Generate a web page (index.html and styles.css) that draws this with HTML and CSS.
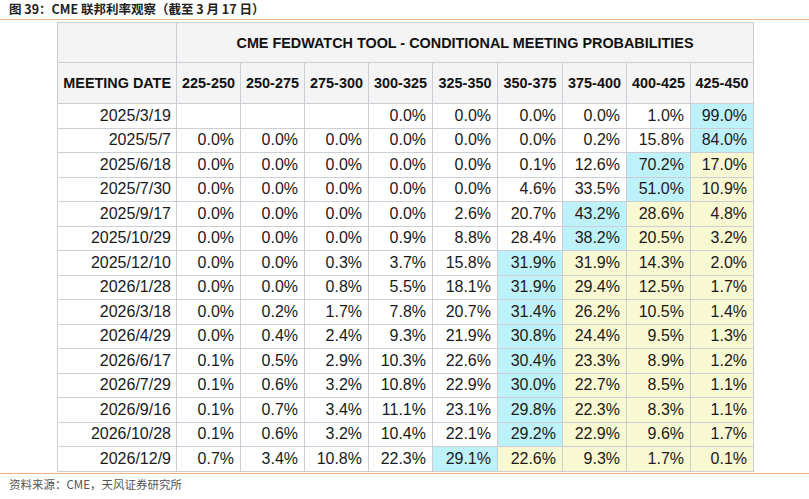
FILE: index.html
```html
<!DOCTYPE html>
<html lang="zh">
<head>
<meta charset="utf-8">
<link rel="stylesheet" href="styles.css">
</head>
<body>
<div class="caption">图 39：CME 联邦利率观察（截至 3 月 17 日）</div>
<table class="fed">
<colgroup>
<col class="c-date"><col class="c-n"><col class="c-n"><col class="c-n"><col class="c-n"><col class="c-w"><col class="c-w"><col class="c-n"><col class="c-n"><col class="c-l">
</colgroup>
<thead>
<tr class="h1"><th></th><th colspan="9">CME FEDWATCH TOOL - CONDITIONAL MEETING PROBABILITIES</th></tr>
<tr class="h2"><th>MEETING DATE</th><th>225-250</th><th>250-275</th><th>275-300</th><th>300-325</th><th>325-350</th><th>350-375</th><th>375-400</th><th>400-425</th><th>425-450</th></tr>
</thead>
<tbody>
<tr><td>2025/3/19</td><td></td><td></td><td></td><td>0.0%</td><td>0.0%</td><td>0.0%</td><td>0.0%</td><td>1.0%</td><td class="c">99.0%</td></tr>
<tr><td>2025/5/7</td><td>0.0%</td><td>0.0%</td><td>0.0%</td><td>0.0%</td><td>0.0%</td><td>0.0%</td><td>0.2%</td><td>15.8%</td><td class="c">84.0%</td></tr>
<tr><td>2025/6/18</td><td>0.0%</td><td>0.0%</td><td>0.0%</td><td>0.0%</td><td>0.0%</td><td>0.1%</td><td>12.6%</td><td class="c">70.2%</td><td class="y">17.0%</td></tr>
<tr><td>2025/7/30</td><td>0.0%</td><td>0.0%</td><td>0.0%</td><td>0.0%</td><td>0.0%</td><td>4.6%</td><td>33.5%</td><td class="c">51.0%</td><td class="y">10.9%</td></tr>
<tr><td>2025/9/17</td><td>0.0%</td><td>0.0%</td><td>0.0%</td><td>0.0%</td><td>2.6%</td><td>20.7%</td><td class="c">43.2%</td><td class="y">28.6%</td><td class="y">4.8%</td></tr>
<tr><td>2025/10/29</td><td>0.0%</td><td>0.0%</td><td>0.0%</td><td>0.9%</td><td>8.8%</td><td>28.4%</td><td class="c">38.2%</td><td class="y">20.5%</td><td class="y">3.2%</td></tr>
<tr><td>2025/12/10</td><td>0.0%</td><td>0.0%</td><td>0.3%</td><td>3.7%</td><td>15.8%</td><td class="c">31.9%</td><td class="y">31.9%</td><td class="y">14.3%</td><td class="y">2.0%</td></tr>
<tr><td>2026/1/28</td><td>0.0%</td><td>0.0%</td><td>0.8%</td><td>5.5%</td><td>18.1%</td><td class="c">31.9%</td><td class="y">29.4%</td><td class="y">12.5%</td><td class="y">1.7%</td></tr>
<tr><td>2026/3/18</td><td>0.0%</td><td>0.2%</td><td>1.7%</td><td>7.8%</td><td>20.7%</td><td class="c">31.4%</td><td class="y">26.2%</td><td class="y">10.5%</td><td class="y">1.4%</td></tr>
<tr><td>2026/4/29</td><td>0.0%</td><td>0.4%</td><td>2.4%</td><td>9.3%</td><td>21.9%</td><td class="c">30.8%</td><td class="y">24.4%</td><td class="y">9.5%</td><td class="y">1.3%</td></tr>
<tr><td>2026/6/17</td><td>0.1%</td><td>0.5%</td><td>2.9%</td><td>10.3%</td><td>22.6%</td><td class="c">30.4%</td><td class="y">23.3%</td><td class="y">8.9%</td><td class="y">1.2%</td></tr>
<tr><td>2026/7/29</td><td>0.1%</td><td>0.6%</td><td>3.2%</td><td>10.8%</td><td>22.9%</td><td class="c">30.0%</td><td class="y">22.7%</td><td class="y">8.5%</td><td class="y">1.1%</td></tr>
<tr><td>2026/9/16</td><td>0.1%</td><td>0.7%</td><td>3.4%</td><td>11.1%</td><td>23.1%</td><td class="c">29.8%</td><td class="y">22.3%</td><td class="y">8.3%</td><td class="y">1.1%</td></tr>
<tr><td>2026/10/28</td><td>0.1%</td><td>0.6%</td><td>3.2%</td><td>10.4%</td><td>22.1%</td><td class="c">29.2%</td><td class="y">22.9%</td><td class="y">9.6%</td><td class="y">1.7%</td></tr>
<tr><td>2026/12/9</td><td>0.7%</td><td>3.4%</td><td>10.8%</td><td>22.3%</td><td class="c">29.1%</td><td class="y">22.6%</td><td class="y">9.3%</td><td class="y">1.7%</td><td class="y">0.1%</td></tr>
</tbody>
</table>
<div class="source">资料来源：CME，天风证券研究所</div>
</body>
</html>
```
FILE: styles.css
```css
html, body {
  margin: 0;
  padding: 0;
  background: #ffffff;
}
body {
  width: 809px;
  height: 499px;
  overflow: hidden;
}
.caption {
  box-sizing: border-box;
  height: 20px;
  line-height: 18px;
  padding-left: 9px;
  font-family: "Noto Sans CJK SC", "Noto Sans", sans-serif;
  font-size: 12.5px;
  font-weight: bold;
  color: #222222;
  border-bottom: 1px solid #f4b183;
}
.fed {
  margin: 2px 0 0 57px;
  border-collapse: collapse;
  table-layout: fixed;
  width: 696px;
  font-family: "Liberation Sans", Arial, sans-serif;
  color: #1a1a1a;
}
.c-date { width: 119px; }
.c-n { width: 64px; }
.c-w { width: 65px; }
.c-l { width: 63px; }
.fed th, .fed td {
  border: 1px solid #cdcdd5;
  padding: 0;
}
.fed th {
  background: #f4f4f4;
  font-size: 14.4px;
  font-weight: bold;
  color: #111111;
  text-align: center;
}
.fed .h1 { height: 40px; }
.fed .h2 { height: 41px; }
.fed .h2 th:first-child { text-align: right; padding-right: 5px; }
.fed td {
  height: 23.5px;
  font-size: 16px;
  text-align: right;
  padding-right: 6px;
  background: #ffffff;
}
.fed td:first-child { padding-right: 5px; }
.fed td.c { background: #bdf2fb; }
.fed td.y { background: #f8f8d2; }
.source {
  margin-top: 1px;
  border-top: 1px solid #f4b183;
  padding: 2px 0 0 9px;
  font-family: "Noto Sans CJK SC", "Noto Sans", sans-serif;
  font-size: 11.5px;
  line-height: 16px;
  color: #555555;
}
```
